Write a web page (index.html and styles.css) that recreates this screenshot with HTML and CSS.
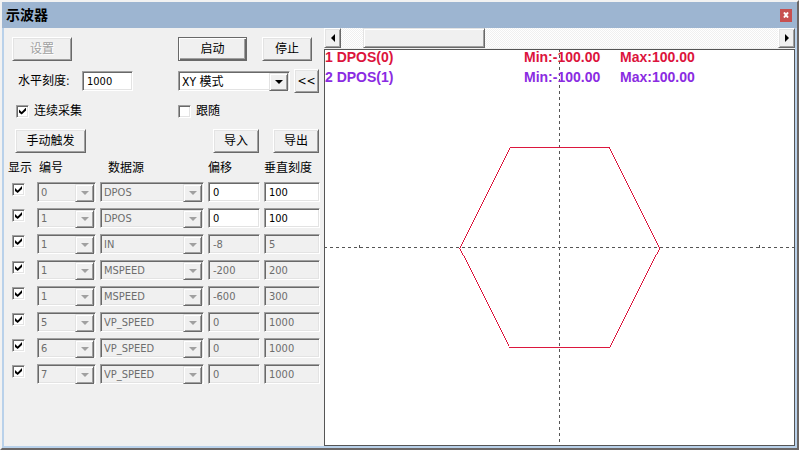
FILE: index.html
```html
<!DOCTYPE html>
<html lang="zh-CN">
<head>
    <meta charset="UTF-8">
    <meta name="viewport" content="width=device-width, initial-scale=1.0">
    <title>示波器</title>
    <link rel="stylesheet" href="styles.css">
</head>
<body>
    <div class="window">
        <header class="title-bar">
            <h1>示波器</h1>
            <button class="close-btn" aria-label="关闭"><svg viewBox="0 0 6 6" width="6" height="6"><path d="M1 0.5L5 5.5M5 0.5L1 5.5"/></svg></button>
        </header>
        <main class="content">
            <form class="panel">
                <div class="toolbar">
                    <div class="group"><button type="button" class="btn btn-set" disabled>设置</button></div>
                    <div class="group group-run">
                        <button type="button" class="btn btn-start">启动</button>
                        <button type="button" class="btn btn-stop">停止</button>
                    </div>
                    <div class="group group-scale">
                        <label for="hscale">水平刻度:</label>
                        <input type="text" class="field" id="hscale" value="1000">
                    </div>
                    <div class="group group-mode">
                        <span class="combo"><select aria-label="模式"><option>XY 模式</option></select></span>
                        <button type="button" class="btn btn-fold">&lt;&lt;</button>
                    </div>
                    <div class="group group-check">
                        <input type="checkbox" id="continuous" checked><label for="continuous">连续采集</label>
                    </div>
                    <div class="group">
                        <input type="checkbox" id="follow"><label for="follow">跟随</label>
                    </div>
                    <div class="group group-trigger"><button type="button" class="btn btn-trigger">手动触发</button></div>
                    <div class="group group-file">
                        <button type="button" class="btn btn-file">导入</button>
                        <button type="button" class="btn btn-file">导出</button>
                    </div>
                </div>
                <table class="channels">
                    <thead>
                        <tr><th class="col-show">显示</th><th class="col-num">编号</th><th class="col-src">数据源</th><th class="col-offset">偏移</th><th class="col-scale">垂直刻度</th></tr>
                    </thead>
                    <tbody>
                        <tr>
                            <td><input type="checkbox" aria-label="显示" checked></td>
                            <td><span class="combo"><select aria-label="编号" disabled><option>0</option></select></span></td>
                            <td><span class="combo"><select aria-label="数据源" disabled><option>DPOS</option></select></span></td>
                            <td><input type="text" class="field" aria-label="偏移" value="0"></td>
                            <td><input type="text" class="field" aria-label="垂直刻度" value="100"></td>
                        </tr>
                        <tr>
                            <td><input type="checkbox" aria-label="显示" checked></td>
                            <td><span class="combo"><select aria-label="编号" disabled><option>1</option></select></span></td>
                            <td><span class="combo"><select aria-label="数据源" disabled><option>DPOS</option></select></span></td>
                            <td><input type="text" class="field" aria-label="偏移" value="0"></td>
                            <td><input type="text" class="field" aria-label="垂直刻度" value="100"></td>
                        </tr>
                        <tr>
                            <td><input type="checkbox" aria-label="显示" checked></td>
                            <td><span class="combo"><select aria-label="编号" disabled><option>1</option></select></span></td>
                            <td><span class="combo"><select aria-label="数据源" disabled><option>IN</option></select></span></td>
                            <td><input type="text" class="field" aria-label="偏移" value="-8" disabled></td>
                            <td><input type="text" class="field" aria-label="垂直刻度" value="5" disabled></td>
                        </tr>
                        <tr>
                            <td><input type="checkbox" aria-label="显示" checked></td>
                            <td><span class="combo"><select aria-label="编号" disabled><option>1</option></select></span></td>
                            <td><span class="combo"><select aria-label="数据源" disabled><option>MSPEED</option></select></span></td>
                            <td><input type="text" class="field" aria-label="偏移" value="-200" disabled></td>
                            <td><input type="text" class="field" aria-label="垂直刻度" value="200" disabled></td>
                        </tr>
                        <tr>
                            <td><input type="checkbox" aria-label="显示" checked></td>
                            <td><span class="combo"><select aria-label="编号" disabled><option>1</option></select></span></td>
                            <td><span class="combo"><select aria-label="数据源" disabled><option>MSPEED</option></select></span></td>
                            <td><input type="text" class="field" aria-label="偏移" value="-600" disabled></td>
                            <td><input type="text" class="field" aria-label="垂直刻度" value="300" disabled></td>
                        </tr>
                        <tr>
                            <td><input type="checkbox" aria-label="显示" checked></td>
                            <td><span class="combo"><select aria-label="编号" disabled><option>5</option></select></span></td>
                            <td><span class="combo"><select aria-label="数据源" disabled><option>VP_SPEED</option></select></span></td>
                            <td><input type="text" class="field" aria-label="偏移" value="0" disabled></td>
                            <td><input type="text" class="field" aria-label="垂直刻度" value="1000" disabled></td>
                        </tr>
                        <tr>
                            <td><input type="checkbox" aria-label="显示" checked></td>
                            <td><span class="combo"><select aria-label="编号" disabled><option>6</option></select></span></td>
                            <td><span class="combo"><select aria-label="数据源" disabled><option>VP_SPEED</option></select></span></td>
                            <td><input type="text" class="field" aria-label="偏移" value="0" disabled></td>
                            <td><input type="text" class="field" aria-label="垂直刻度" value="1000" disabled></td>
                        </tr>
                        <tr>
                            <td><input type="checkbox" aria-label="显示" checked></td>
                            <td><span class="combo"><select aria-label="编号" disabled><option>7</option></select></span></td>
                            <td><span class="combo"><select aria-label="数据源" disabled><option>VP_SPEED</option></select></span></td>
                            <td><input type="text" class="field" aria-label="偏移" value="0" disabled></td>
                            <td><input type="text" class="field" aria-label="垂直刻度" value="1000" disabled></td>
                        </tr>
                    </tbody>
                </table>
            </form>
            <section class="scope">
                <div class="scrollbar">
                    <button type="button" class="btn scroll-btn" aria-label="向左"><svg viewBox="0 0 4 8" width="4" height="8"><path d="M4 0V8L0 4Z"/></svg></button>
                    <div class="track"><div class="thumb"></div></div>
                    <button type="button" class="btn scroll-btn" aria-label="向右"><svg viewBox="0 0 4 8" width="4" height="8"><path d="M0 0V8L4 4Z"/></svg></button>
                </div>
                <div class="plot">
                    <svg class="graph" width="100%" height="100%">
                        <line class="axis" x1="0" y1="50%" x2="100%" y2="50%"/>
                        <line class="axis" x1="50%" y1="0" x2="50%" y2="100%"/>
                        <!-- origin in the middle of the plot -->
                        <svg x="50%" y="50%" overflow="visible">
                            <path class="tick" d="M-200 -3V0M200 -3V0"/>
                            <path class="trace" d="M100 0L50 -100H-50L-100 0L-50 100H50Z"/>
                        </svg>
                    </svg>
                    <div class="legend">
                        <div class="legend-row ch1"><span>1 DPOS(0)</span><span>Min:-100.00</span><span>Max:100.00</span></div>
                        <div class="legend-row ch2"><span>2 DPOS(1)</span><span>Min:-100.00</span><span>Max:100.00</span></div>
                    </div>
                </div>
            </section>
        </main>
    </div>
</body>
</html>
```
FILE: styles.css
```css
*{margin:0;padding:0;box-sizing:border-box}
body{background:#f0f0f0;color:#000;font:12px/16px "DejaVu Sans Condensed","Noto Sans CJK SC",sans-serif}
button,input,select{font:inherit;color:inherit}
.window{min-height:100vh;display:flex;flex-direction:column;background:#b9d1ea;border:2px solid;border-color:#f2f2f2 #6b6766 #6b6766 #f2f2f2}
.title-bar{height:26px;background:#9db5d1;display:flex;align-items:center;justify-content:space-between;padding:0 5px 0 4px}
.title-bar h1{font-size:14px;line-height:20px;font-weight:700}
.close-btn{width:12px;height:13px;border:none;background:#c75050;display:flex;align-items:center;justify-content:center}
.close-btn path{stroke:#fff;stroke-width:2}
.content{flex:1;display:flex;margin:0 2px 2px;background:#f0f0f0}
.panel{width:320px;flex:none}

/* controls */
.btn{height:24px;background:#f0f0f0;border:1px solid;border-color:#fff #696969 #696969 #fff;box-shadow:inset 1px 1px #e3e3e3,inset -1px -1px #a0a0a0;display:flex;align-items:center;justify-content:center}
.btn:disabled{color:#a0a0a0;text-shadow:1px 1px #fff}
.field{height:20px;width:100%;font-size:11px;background:#fff;border:1px solid;border-color:#a0a0a0 #fff #fff #a0a0a0;box-shadow:inset 1px 1px #696969,inset -1px -1px #e3e3e3;padding:0 4px;display:block}
.field:disabled{background:#f0f0f0;color:#6d6d6d}
.combo{position:relative;display:block;height:20px;background:#fff;border:1px solid;border-color:#a0a0a0 #fff #fff #a0a0a0;box-shadow:inset 1px 1px #696969,inset -1px -1px #e3e3e3}
.combo select{appearance:none;display:block;width:100%;height:18px;border:none;background:none;padding:1px 20px 0 3px}
.combo::before{content:"";position:absolute;top:1px;right:1px;width:17px;height:16px;background:#f0f0f0;border:1px solid;border-color:#e3e3e3 #696969 #696969 #e3e3e3;box-shadow:inset 1px 1px #fff,inset -1px -1px #a0a0a0;pointer-events:none}
.combo::after{content:"";position:absolute;top:8px;right:6px;border:4px solid transparent;border-top-color:#000;border-bottom:0;pointer-events:none}
.combo:has(select:disabled){background:#f0f0f0}
.combo:has(select:disabled)::after{border-top-color:#a0a0a0}
.combo select:disabled{color:#6d6d6d;opacity:1;font-size:11px}
input[type=checkbox]{appearance:none;display:block;flex:none;width:13px;height:13px;background:#fff;border:1px solid;border-color:#a0a0a0 #fff #fff #a0a0a0;box-shadow:inset 1px 1px #696969,inset -1px -1px #e3e3e3}
input[type=checkbox]:checked::before{content:"";display:block;width:7px;height:7px;margin:2px 0 0 2px;background:#000;clip-path:polygon(0 29%,38% 64%,100% 0,100% 43%,38% 100%,0 71%)}

/* toolbar */
.toolbar{display:grid;grid-template-columns:174px 1fr;grid-template-rows:24px 24px 20px 24px;row-gap:8px;padding:9px 5px 2px 0}
.group{display:flex;align-items:center}
.group input+label{margin-left:5px}
.group:first-child{padding-left:8px}
.group-run{gap:15px}
.group-scale{padding-left:14px}
.group-scale .field{width:51px;margin-left:auto;margin-right:45px}
.group-mode{gap:4px}
.group-mode .combo{flex:1}
.group-check{padding-left:12px}
.group-trigger{padding-left:11px}
.group-file{gap:14px;justify-content:flex-end}
.btn-set{width:60px}
.btn-start{width:69px;border-color:#696969;box-shadow:inset 1px 1px #fff,inset -1px -1px #696969,inset -2px -2px #a0a0a0}
.btn-stop{width:50px}
.btn-fold{width:25px}
.btn-trigger{width:71px}
.btn-file{width:46px}

/* channels */
.channels{width:100%;table-layout:fixed;border-collapse:collapse}
.channels th{height:24px;padding-top:2px;font-weight:400;text-align:left;white-space:nowrap}
.channels td{height:26px;padding-right:4px}
.channels td:first-child{padding:0 0 5px 8px}
.channels .col-show{width:33px;padding-left:4px}
.channels .col-num{width:63px;padding-left:2px}
.channels .col-src{width:108px;padding-left:8px}
.channels .col-offset{width:56px}

/* scope */
.scope{flex:1;display:flex;flex-direction:column;min-width:0}
.scrollbar{display:flex;height:21px;padding-bottom:1px}
.scroll-btn{width:17px;height:20px;flex:none}
.track{flex:1;background:repeating-conic-gradient(#f0f0f0 0 25%,#fff 0 50%) 0 0/2px 2px}
.thumb{width:28%;height:20px;margin-left:5%;background:#f0f0f0;border:1px solid;border-color:#e3e3e3 #696969 #696969 #e3e3e3;box-shadow:inset 1px 1px #fff,inset -1px -1px #a0a0a0}
.plot{flex:1;position:relative;background:#fff;border:1px solid #555}
.graph{position:absolute;inset:0;shape-rendering:crispEdges}
.axis{stroke:#555;stroke-dasharray:3 3;stroke-dashoffset:1}
.tick{stroke:#555}
.trace{fill:none;stroke:#dc143c;stroke-width:.99}
.legend{position:relative;display:grid;gap:6px;font:bold 14px/14px "Liberation Sans",sans-serif}
.legend-row{display:grid;grid-template-columns:199px 96px auto}
.ch1{color:#dc143c}
.ch2{color:#8a2be2}
```
